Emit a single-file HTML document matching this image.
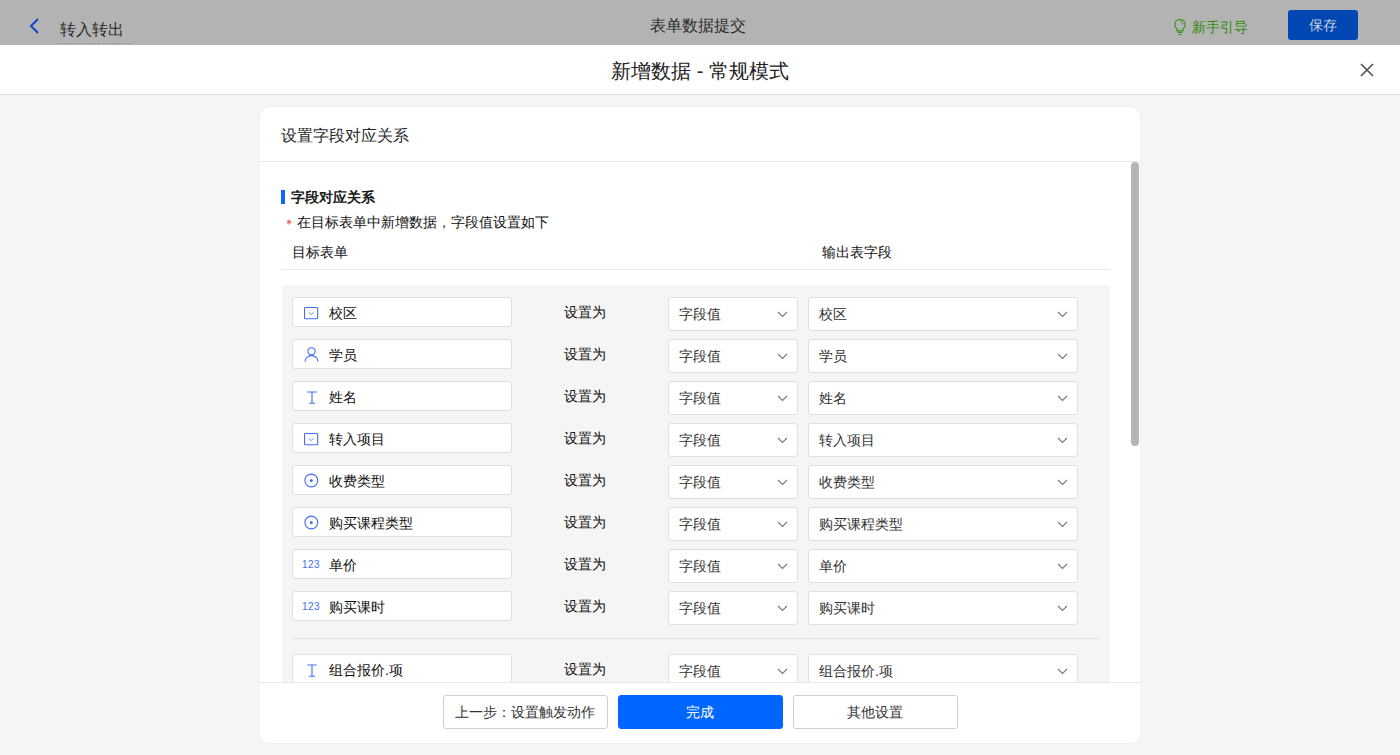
<!DOCTYPE html>
<html><head><meta charset="utf-8">
<style>
*{box-sizing:border-box;margin:0;padding:0}
html,body{width:1400px;height:755px;overflow:hidden;background:#f5f5f5;font-family:"Liberation Sans",sans-serif;color:#222}
.abs{position:absolute}
#topbar{position:absolute;left:0;top:0;width:1400px;height:45px;background:#b3b3b3}
#mhead{position:absolute;left:0;top:45px;width:1400px;height:50px;background:#fff;border-bottom:1px solid #e0e0e0}
#card{position:absolute;left:260px;top:107px;width:880px;height:636px;background:#fff;border-radius:10px;overflow:hidden;box-shadow:0 0 3px rgba(0,0,0,0.05)}
.t14{font-size:14px;line-height:20px;white-space:nowrap}
.num{position:absolute;left:9px;top:8px;font-size:10px;line-height:14px;letter-spacing:0.4px;color:#3f6cf5}
#card .sb{}
.fbox{position:absolute;left:292px;width:220px;height:30px;background:#fff;border:1px solid #dfdfdf;border-radius:3px}
.fbox .txt{position:absolute;left:36px;top:5px;font-size:14px;line-height:20px;color:#111}
.fbox .ic{position:absolute;left:11px;top:7px;width:15px;height:15px}
.setas{position:absolute;left:564px;font-size:14px;line-height:20px;color:#111}
.sel{position:absolute;height:34px;background:#fff;border:1px solid #dfdfdf;border-radius:3px}
.sel .txt{position:absolute;left:10px;top:6px;font-size:14px;line-height:20px;color:#333}
.sel svg{position:absolute;right:9px;top:13px}
.s1{left:668px;width:130px}
.s2{left:808px;width:270px}
.btn{position:absolute;top:695px;height:34px;width:165px;padding-right:2px;border:1px solid #cfcfcf;border-radius:3px;background:#fff;font-size:14px;line-height:32px;text-align:center;color:#333}
</style></head><body>
<div id="topbar">
  <svg class="abs" style="left:27px;top:17px" width="14" height="18" viewBox="0 0 14 18"><path d="M11 2 L4 9 L11 16" fill="none" stroke="#1440d0" stroke-width="2"/></svg>
  <div class="abs" style="left:60px;top:19px;font-size:16px;line-height:22px;color:#2c2c2c">转入转出</div>
  <div class="abs" style="left:58px;top:43px;width:72px;border-top:1px dashed #9c9c9c"></div>
  <div class="abs" style="left:650px;top:15px;font-size:16px;line-height:22px;color:#2c2c2c">表单数据提交</div>
  <svg class="abs" style="left:1173px;top:18px" width="14" height="18" viewBox="0 0 14 18"><path d="M7 1.5a5.2 5.2 0 0 0-3 9.4v2h6v-2a5.2 5.2 0 0 0-3-9.4z" fill="none" stroke="#349012" stroke-width="1.1"/><path d="M7.4 3.2a3.4 3.4 0 0 1 2.6 3.2" fill="none" stroke="#349012" stroke-width="1"/><path d="M4.5 14.5h5M5.5 16.5h3" stroke="#349012" stroke-width="1.1"/></svg>
  <div class="abs" style="left:1192px;top:17px;font-size:14px;line-height:20px;color:#2f8c0e">新手引导</div>
  <div class="abs" style="left:1288px;top:10px;width:70px;height:30px;background:#0047b3;border-radius:3px;color:#c8cfdc;font-size:14px;line-height:30px;text-align:center">保存</div>
</div>
<div id="mhead">
  <div class="abs" style="left:0;width:1400px;top:13px;text-align:center;font-size:20px;line-height:26px;color:#222">新增数据 - 常规模式</div>
  <svg class="abs" style="left:1359px;top:17px" width="16" height="16" viewBox="0 0 16 16"><path d="M2 2L14 14M14 2L2 14" stroke="#4a4a4a" stroke-width="1.5"/></svg>
</div>
<div id="card">
  <div class="abs" style="left:21px;top:18px;font-size:16px;line-height:22px;color:#2a2a2a">设置字段对应关系</div>
  <div class="abs" style="left:0;top:54px;width:880px;border-top:1px solid #e6e6e6"></div>
  <div class="abs" style="left:871px;top:55px;width:8px;height:284px;background:#b5b5b5;border-radius:4px"></div>
</div>
<div id="content">
<div class="abs" style="left:281px;top:190px;width:4px;height:14px;background:#0f66ff"></div>
<div class="abs t14" style="left:291px;top:187px;font-weight:bold;color:#1a1a1a">字段对应关系</div>
<svg class="abs" style="left:286px;top:219px" width="6" height="6" viewBox="0 0 6 6"><path d="M3 0.4V5.6M0.75 1.7L5.25 4.3M5.25 1.7L0.75 4.3" stroke="#e8473f" stroke-width="0.9"/></svg>
<div class="abs t14" style="left:297px;top:212px;color:#111">在目标表单中新增数据，字段值设置如下</div>
<div class="abs t14" style="left:292px;top:242px;color:#111">目标表单</div>
<div class="abs t14" style="left:822px;top:242px;color:#111">输出表字段</div>
<div class="abs" style="left:281px;top:269px;width:829px;border-top:1px solid #e6e6e6"></div>
<div class="abs" style="left:282px;top:285px;width:828px;height:400px;background:#f5f5f5"></div>
<div class="fbox" style="top:297px"><svg class="ic" viewBox="0 0 15 15"><rect x="0.5" y="2.5" width="13.2" height="11.2" rx="1" fill="none" stroke="#3f6cf5" stroke-width="1.1"/><path d="M4.5 7.2l2.6 2.4 2.6-2.4" fill="none" stroke="#7b8ef5" stroke-width="1"/></svg><div class="txt">校区</div></div>
<div class="setas" style="top:302px">设置为</div>
<div class="sel s1" style="top:297px"><div class="txt">字段值</div><svg width="11" height="7" viewBox="0 0 11 7"><path d="M1 1l4.5 4.5L10 1" fill="none" stroke="#777" stroke-width="1.1"/></svg></div>
<div class="sel s2" style="top:297px"><div class="txt">校区</div><svg width="11" height="7" viewBox="0 0 11 7"><path d="M1 1l4.5 4.5L10 1" fill="none" stroke="#777" stroke-width="1.1"/></svg></div>
<div class="fbox" style="top:339px"><svg class="ic" viewBox="0 0 15 15"><circle cx="7.5" cy="4.3" r="3.6" fill="none" stroke="#3f6cf5" stroke-width="1.1"/><path d="M1 14.8a6.5 6.2 0 0 1 13 0" fill="none" stroke="#3f6cf5" stroke-width="1.1"/></svg><div class="txt">学员</div></div>
<div class="setas" style="top:344px">设置为</div>
<div class="sel s1" style="top:339px"><div class="txt">字段值</div><svg width="11" height="7" viewBox="0 0 11 7"><path d="M1 1l4.5 4.5L10 1" fill="none" stroke="#777" stroke-width="1.1"/></svg></div>
<div class="sel s2" style="top:339px"><div class="txt">学员</div><svg width="11" height="7" viewBox="0 0 11 7"><path d="M1 1l4.5 4.5L10 1" fill="none" stroke="#777" stroke-width="1.1"/></svg></div>
<div class="fbox" style="top:381px"><svg class="ic" viewBox="0 0 15 15"><path d="M3.2 3h9.6M8 3v11M5.2 14.3h5.8" fill="none" stroke="#3f6cf5" stroke-width="1.1"/></svg><div class="txt">姓名</div></div>
<div class="setas" style="top:386px">设置为</div>
<div class="sel s1" style="top:381px"><div class="txt">字段值</div><svg width="11" height="7" viewBox="0 0 11 7"><path d="M1 1l4.5 4.5L10 1" fill="none" stroke="#777" stroke-width="1.1"/></svg></div>
<div class="sel s2" style="top:381px"><div class="txt">姓名</div><svg width="11" height="7" viewBox="0 0 11 7"><path d="M1 1l4.5 4.5L10 1" fill="none" stroke="#777" stroke-width="1.1"/></svg></div>
<div class="fbox" style="top:423px"><svg class="ic" viewBox="0 0 15 15"><rect x="0.5" y="2.5" width="13.2" height="11.2" rx="1" fill="none" stroke="#3f6cf5" stroke-width="1.1"/><path d="M4.5 7.2l2.6 2.4 2.6-2.4" fill="none" stroke="#7b8ef5" stroke-width="1"/></svg><div class="txt">转入项目</div></div>
<div class="setas" style="top:428px">设置为</div>
<div class="sel s1" style="top:423px"><div class="txt">字段值</div><svg width="11" height="7" viewBox="0 0 11 7"><path d="M1 1l4.5 4.5L10 1" fill="none" stroke="#777" stroke-width="1.1"/></svg></div>
<div class="sel s2" style="top:423px"><div class="txt">转入项目</div><svg width="11" height="7" viewBox="0 0 11 7"><path d="M1 1l4.5 4.5L10 1" fill="none" stroke="#777" stroke-width="1.1"/></svg></div>
<div class="fbox" style="top:465px"><svg class="ic" viewBox="0 0 15 15"><circle cx="7.3" cy="7.5" r="6.4" fill="none" stroke="#3f6cf5" stroke-width="1.1"/><circle cx="7.3" cy="7.5" r="1.5" fill="#3f6cf5"/></svg><div class="txt">收费类型</div></div>
<div class="setas" style="top:470px">设置为</div>
<div class="sel s1" style="top:465px"><div class="txt">字段值</div><svg width="11" height="7" viewBox="0 0 11 7"><path d="M1 1l4.5 4.5L10 1" fill="none" stroke="#777" stroke-width="1.1"/></svg></div>
<div class="sel s2" style="top:465px"><div class="txt">收费类型</div><svg width="11" height="7" viewBox="0 0 11 7"><path d="M1 1l4.5 4.5L10 1" fill="none" stroke="#777" stroke-width="1.1"/></svg></div>
<div class="fbox" style="top:507px"><svg class="ic" viewBox="0 0 15 15"><circle cx="7.3" cy="7.5" r="6.4" fill="none" stroke="#3f6cf5" stroke-width="1.1"/><circle cx="7.3" cy="7.5" r="1.5" fill="#3f6cf5"/></svg><div class="txt">购买课程类型</div></div>
<div class="setas" style="top:512px">设置为</div>
<div class="sel s1" style="top:507px"><div class="txt">字段值</div><svg width="11" height="7" viewBox="0 0 11 7"><path d="M1 1l4.5 4.5L10 1" fill="none" stroke="#777" stroke-width="1.1"/></svg></div>
<div class="sel s2" style="top:507px"><div class="txt">购买课程类型</div><svg width="11" height="7" viewBox="0 0 11 7"><path d="M1 1l4.5 4.5L10 1" fill="none" stroke="#777" stroke-width="1.1"/></svg></div>
<div class="fbox" style="top:549px"><div class="num">123</div><div class="txt">单价</div></div>
<div class="setas" style="top:554px">设置为</div>
<div class="sel s1" style="top:549px"><div class="txt">字段值</div><svg width="11" height="7" viewBox="0 0 11 7"><path d="M1 1l4.5 4.5L10 1" fill="none" stroke="#777" stroke-width="1.1"/></svg></div>
<div class="sel s2" style="top:549px"><div class="txt">单价</div><svg width="11" height="7" viewBox="0 0 11 7"><path d="M1 1l4.5 4.5L10 1" fill="none" stroke="#777" stroke-width="1.1"/></svg></div>
<div class="fbox" style="top:591px"><div class="num">123</div><div class="txt">购买课时</div></div>
<div class="setas" style="top:596px">设置为</div>
<div class="sel s1" style="top:591px"><div class="txt">字段值</div><svg width="11" height="7" viewBox="0 0 11 7"><path d="M1 1l4.5 4.5L10 1" fill="none" stroke="#777" stroke-width="1.1"/></svg></div>
<div class="sel s2" style="top:591px"><div class="txt">购买课时</div><svg width="11" height="7" viewBox="0 0 11 7"><path d="M1 1l4.5 4.5L10 1" fill="none" stroke="#777" stroke-width="1.1"/></svg></div>
<div class="abs" style="left:292px;top:638px;width:808px;border-top:1px solid #e3e3e3"></div>
<div class="fbox" style="top:654px"><svg class="ic" viewBox="0 0 15 15"><path d="M3.2 3h9.6M8 3v11M5.2 14.3h5.8" fill="none" stroke="#3f6cf5" stroke-width="1.1"/></svg><div class="txt">组合报价.项</div></div>
<div class="setas" style="top:659px">设置为</div>
<div class="sel s1" style="top:654px"><div class="txt">字段值</div><svg width="11" height="7" viewBox="0 0 11 7"><path d="M1 1l4.5 4.5L10 1" fill="none" stroke="#777" stroke-width="1.1"/></svg></div>
<div class="sel s2" style="top:654px"><div class="txt">组合报价.项</div><svg width="11" height="7" viewBox="0 0 11 7"><path d="M1 1l4.5 4.5L10 1" fill="none" stroke="#777" stroke-width="1.1"/></svg></div>

<div class="abs" style="left:260px;top:682px;width:880px;height:61px;background:#fff;border-top:1px solid #e6e6e6;border-radius:0 0 10px 10px"></div>
<div class="btn" style="left:443px">上一步：设置触发动作</div>
<div class="btn" style="left:618px;background:#0066ff;border-color:#0066ff;color:#fff">完成</div>
<div class="btn" style="left:793px">其他设置</div>
</div>
</body></html>
